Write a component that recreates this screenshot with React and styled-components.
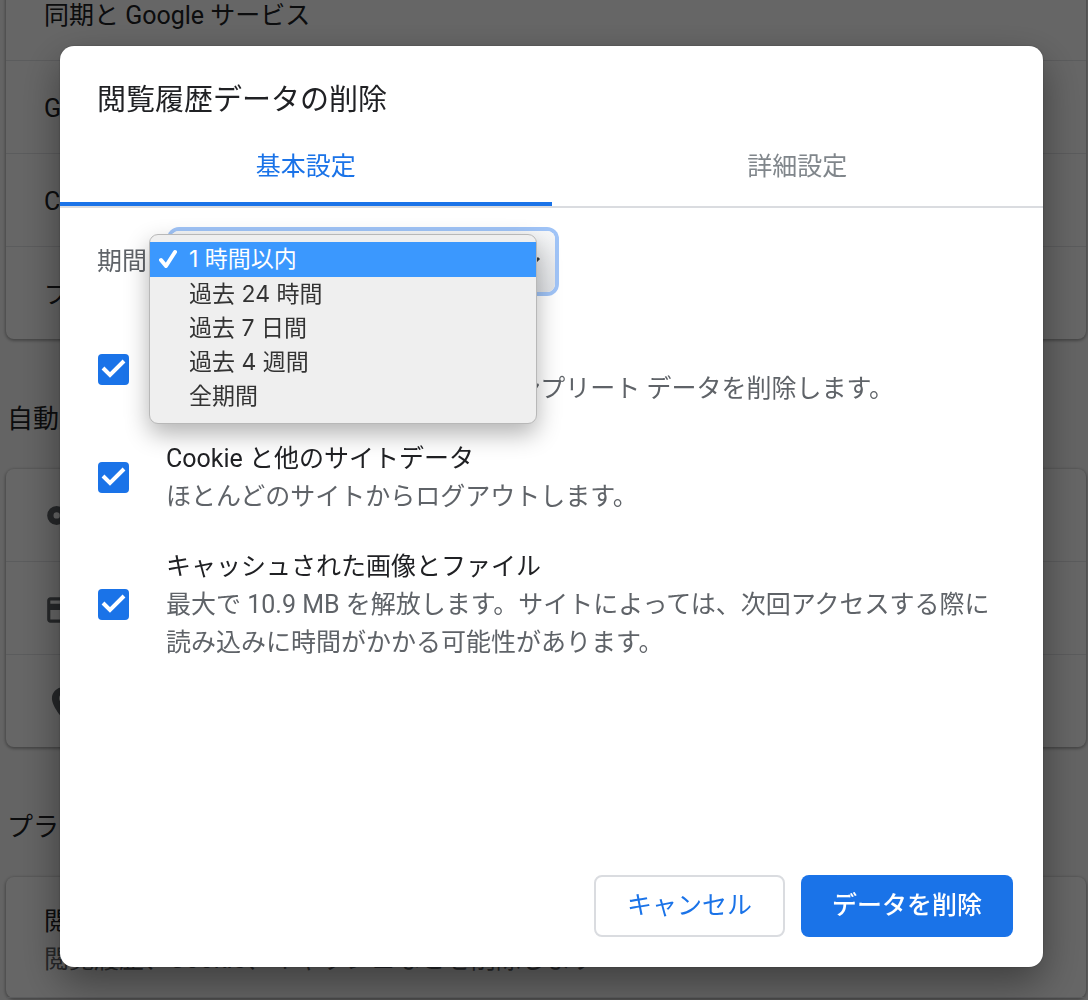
import { useState } from "react"
import styled, { createGlobalStyle } from "styled-components"
import { MdCreditCard, MdLocationOn } from "react-icons/md"

const periods = ["1 時間以内", "過去 24 時間", "過去 7 日間", "過去 4 週間", "全期間"]

const dataTypes = [
    {
        id: "history",
        title: "閲覧履歴",
        text: "アドレスバーの履歴とオートコンプリート データを削除します。",
    },
    {
        id: "cookies",
        title: "Cookie と他のサイトデータ",
        text: "ほとんどのサイトからログアウトします。",
    },
    {
        id: "cache",
        title: "キャッシュされた画像とファイル",
        text: "最大で 10.9 MB を解放します。サイトによっては、次回アクセスする際に読み込みに時間がかかる可能性があります。",
    },
]

const KeyIcon = () => (
    <svg width="38" height="38" viewBox="0 0 24 24" aria-hidden="true">
        <circle cx="8" cy="11" r="4" fill="none" stroke="currentColor" strokeWidth="4" />
        <path d="M13 9h10v4h-2v4h-4v-4h-4z" fill="currentColor" />
    </svg>
)

const SettingsPage = () => (
    <Page>
        <Card>
            <Row>同期と Google サービス</Row>
            <Row>Google アカウントの管理</Row>
            <Row>Chrome の名前と画像</Row>
            <Row>ブックマークと設定のインポート</Row>
        </Card>
        <SectionTitle>自動入力</SectionTitle>
        <Card>
            <Row><KeyIcon />パスワード</Row>
            <Row><MdCreditCard size={38} />お支払い方法</Row>
            <Row><MdLocationOn size={38} />住所やその他の情報</Row>
        </Card>
        <SectionTitle>プライバシーとセキュリティ</SectionTitle>
        <Card>
            <TallRow>
                <div>閲覧履歴データの削除</div>
                <Secondary>閲覧履歴、Cookie、キャッシュなどを削除します</Secondary>
            </TallRow>
        </Card>
    </Page>
)

const PeriodSelect = () => {
    const [period, setPeriod] = useState(periods[0])
    return (
        <PeriodRow>
            <label htmlFor="period">期間</label>
            <SelectWrapper>
                <Select id="period" value={period} onChange={(e) => setPeriod(e.target.value)}>
                    {periods.map((item) => <option key={item}>{item}</option>)}
                </Select>
                <Arrow viewBox="0 0 18 12" aria-hidden="true">
                    <path d="M2 2l7 7 7-7" />
                </Arrow>
                <Menu role="listbox" aria-label="期間">
                    {periods.map((item) => (
                        <MenuItem
                            key={item}
                            role="option"
                            aria-selected={item === period}
                            $selected={item === period}
                            onClick={() => setPeriod(item)}
                        >
                            {item === period && (
                                <MenuCheck viewBox="0 0 18 20" aria-hidden="true">
                                    <path d="M2 11l5 6L16 3" />
                                </MenuCheck>
                            )}
                            {item}
                        </MenuItem>
                    ))}
                </Menu>
            </SelectWrapper>
        </PeriodRow>
    )
}

const DataOption = ({ id, title, text }) => (
    <Option>
        <CheckboxWrapper>
            <Checkbox type="checkbox" id={id} defaultChecked />
            <CheckMark viewBox="0 0 31 31" aria-hidden="true">
                <path d="M5 14l7 7L26 7" />
            </CheckMark>
        </CheckboxWrapper>
        <OptionLabel htmlFor={id}>
            {title}
            <OptionText>{text}</OptionText>
        </OptionLabel>
    </Option>
)

export default function App() {
    return (
        <>
            <GlobalStyle />
            <SettingsPage />
            <Backdrop>
                <Dialog role="dialog" aria-modal="true" aria-labelledby="dialog-title">
                    <Title id="dialog-title">閲覧履歴データの削除</Title>
                    <Tabs role="tablist">
                        <Tab role="tab" aria-selected="true" $active>基本設定</Tab>
                        <Tab role="tab" aria-selected="false">詳細設定</Tab>
                    </Tabs>
                    <Body>
                        <PeriodSelect />
                        <Options>
                            {dataTypes.map((item) => <DataOption key={item.id} {...item} />)}
                        </Options>
                    </Body>
                    <Actions>
                        <CancelButton>キャンセル</CancelButton>
                        <ConfirmButton>データを削除</ConfirmButton>
                    </Actions>
                </Dialog>
            </Backdrop>
        </>
    )
}

const GlobalStyle = createGlobalStyle`
    * {
        box-sizing: border-box;
    }

    body {
        margin: 0;
        font-family: Roboto, "Noto Sans CJK JP", sans-serif;
        font-size: 25px;
        line-height: 38px;
        color: #202124;
    }

    button, select {
        font: inherit;
    }
`

const Page = styled.main`
    height: 100vh;
    padding: 0 2px 0 6px;
    overflow: hidden;
    background: #fafafa;

    /* the list is scrolled a little past its first row */
    > :first-child {
        margin-top: -32px;
    }
`

const Card = styled.section`
    background: #fff;
    border-radius: 8px;
    box-shadow: 0 1px 3px 1px rgba(0, 0, 0, 0.3);
`

const Row = styled.div`
    display: flex;
    align-items: center;
    gap: 32px;
    height: 93px;
    padding: 4px 38px 0;
    border-bottom: 1px solid #e4e5e8;

    &:last-child {
        height: 92px;
        border-bottom: none;
    }

    svg {
        color: #5f6368;
    }
`

const TallRow = styled.div`
    padding: 26px 38px 18px;
    border-bottom: 1px solid #e4e5e8;
`

const Secondary = styled.div`
    color: #5f6368;
`

const SectionTitle = styled.h2`
    margin: 0;
    padding: 61px 1px 31px;
    font-size: 26px;
    font-weight: 400;
    line-height: 38px;
`

const Backdrop = styled.div`
    position: fixed;
    inset: 0;
    display: flex;
    padding: 46px 45px 33px 60px;
    background: rgba(0, 0, 0, 0.6);
`

const Dialog = styled.div`
    flex: 1;
    display: flex;
    flex-direction: column;
    background: #fff;
    border-radius: 14px;
    box-shadow: 0 0 2px rgba(0, 0, 0, 0.3), 0 16px 40px rgba(0, 0, 0, 0.4);
`

const Title = styled.h1`
    margin: 0;
    padding: 32px 37px 3px;
    font-size: 29px;
    font-weight: 400;
    line-height: 44px;
`

const Tabs = styled.div`
    display: flex;
    border-bottom: 2px solid #dadce0;
`

const Tab = styled.button`
    flex: 1;
    height: 81px;
    padding: 6px 0 0;
    border: none;
    border-bottom: 4px solid ${({ $active }) => ($active ? "#1a73e8" : "transparent")};
    background: none;
    color: ${({ $active }) => ($active ? "#1a73e8" : "#80868b")};
`

const Body = styled.div`
    flex: 1;
    padding: 23px 38px 0 37px;
`

const PeriodRow = styled.div`
    display: flex;
    align-items: center;
    gap: 24px;
    color: #5f6368;
`

const SelectWrapper = styled.div`
    position: relative;
    width: 384px;
`

const Select = styled.select`
    display: block;
    width: 100%;
    height: 61px;
    padding: 0 44px 0 18px;
    appearance: none;
    border: none;
    border-radius: 8px;
    outline: none;
    background: linear-gradient(#f6f7f8, #dfe1e4);
    box-shadow: 0 0 0 4px #a0c4f7;
    color: #3c4043;
`

const Arrow = styled.svg`
    position: absolute;
    top: 25px;
    right: 14px;
    width: 18px;
    height: 12px;
    fill: none;
    stroke: #3c4043;
    stroke-width: 3;
    pointer-events: none;
`

const Menu = styled.ul`
    position: absolute;
    z-index: 1;
    top: 3px;
    left: -22px;
    right: 18px;
    margin: 0;
    padding: 7px 0 10px;
    list-style: none;
    background: #efefef;
    border: 1px solid #b8b8b8;
    border-radius: 9px;
    box-shadow: 0 10px 24px rgba(0, 0, 0, 0.3);
    font-family: Inter, "Noto Sans CJK JP", sans-serif;
    font-size: 23px;
    line-height: 34px;
`

const MenuItem = styled.li`
    position: relative;
    padding: 0 16px ${({ $selected }) => ($selected ? "1px" : "0")} 39px;
    background: ${({ $selected }) => ($selected ? "#3b98fe" : "none")};
    color: ${({ $selected }) => ($selected ? "#fff" : "#333")};
    cursor: default;
`

const MenuCheck = styled.svg`
    position: absolute;
    top: 7px;
    left: 9px;
    width: 18px;
    height: 20px;
    fill: none;
    stroke: currentColor;
    stroke-width: 4;
    stroke-linecap: round;
    stroke-linejoin: round;
`

const Options = styled.div`
    display: flex;
    flex-direction: column;
    gap: 30px;
    padding-top: 38px;
`

const Option = styled.div`
    display: flex;
    align-items: center;
    gap: 37px;
`

const CheckboxWrapper = styled.div`
    position: relative;
    flex: none;
    width: 31px;
    height: 31px;
    margin-left: 1px;
`

const CheckMark = styled.svg`
    position: absolute;
    inset: 0;
    visibility: hidden;
    fill: none;
    stroke: #fff;
    stroke-width: 4;
    pointer-events: none;
`

const Checkbox = styled.input`
    display: block;
    width: 100%;
    height: 100%;
    margin: 0;
    appearance: none;
    border: 4px solid #5f6368;
    border-radius: 4px;

    &:checked {
        border: none;
        background: #1a73e8;
    }

    &:checked + ${CheckMark} {
        visibility: visible;
    }
`

const OptionLabel = styled.label`
    flex: 1;
    padding-top: 2px;
`

const OptionText = styled.span`
    display: block;
    color: #5f6368;
`

const Actions = styled.div`
    display: flex;
    justify-content: flex-end;
    gap: 16px;
    padding: 30px;
`

const Button = styled.button`
    height: 62px;
    padding: 0 31px;
    border-radius: 8px;
`

const CancelButton = styled(Button)`
    border: 2px solid #dadce0;
    background: #fff;
    color: #1a73e8;
`

const ConfirmButton = styled(Button)`
    border: none;
    background: #1a73e8;
    color: #fff;
    font-weight: 500;
`
